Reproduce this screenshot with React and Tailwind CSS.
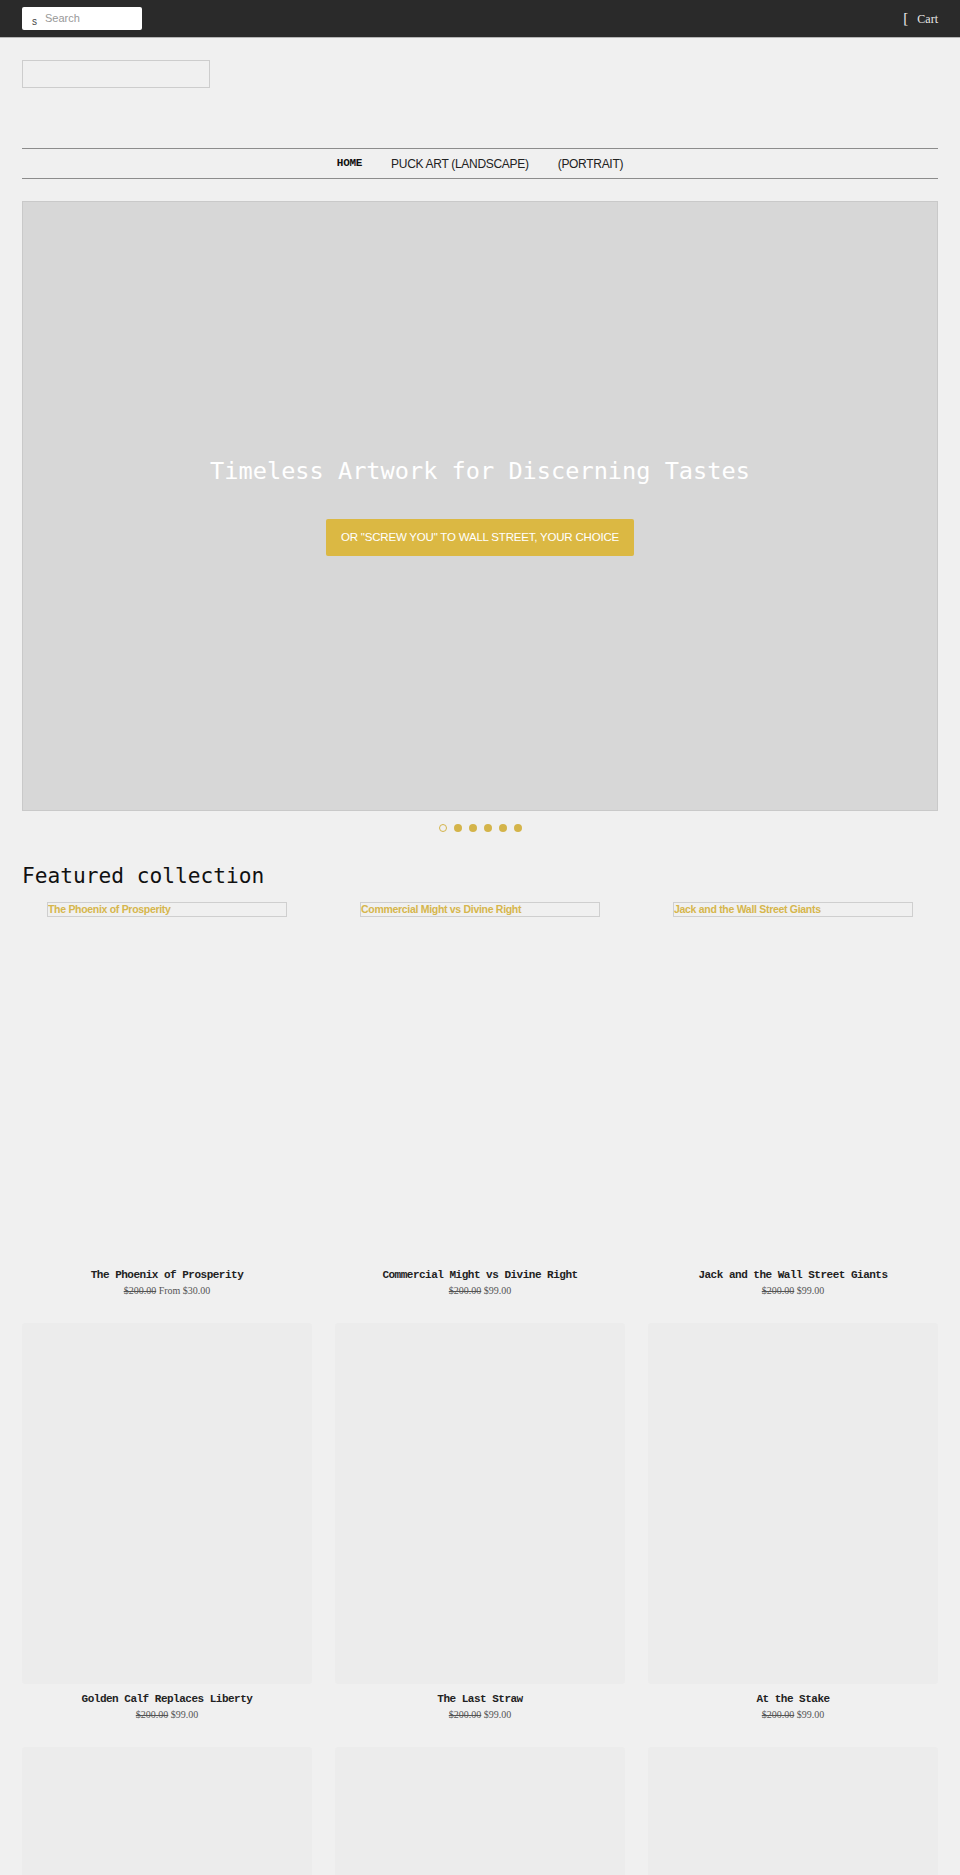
import React from "react";

const MONO = "font-['DejaVu_Sans_Mono',monospace]";

const products = [
  { title: "The Phoenix of Prosperity", was: "$200.00", now: "From $30.00", broken: true },
  { title: "Commercial Might vs Divine Right", was: "$200.00", now: "$99.00", broken: true },
  { title: "Jack and the Wall Street Giants", was: "$200.00", now: "$99.00", broken: true },
  { title: "Golden Calf Replaces Liberty", was: "$200.00", now: "$99.00" },
  { title: "The Last Straw", was: "$200.00", now: "$99.00" },
  { title: "At the Stake", was: "$200.00", now: "$99.00" },
  { title: "", was: "", now: "" },
  { title: "", was: "", now: "" },
  { title: "", was: "", now: "" },
];

function ProductCard({ p }) {
  return (
    <div className="flex flex-col">
      {p.broken ? (
        <div className="h-[361px] flex justify-center">
          <div className="mt-[3px] w-[240px] h-[15px] border border-[#cfcfcf] text-[#d6b64c] text-[10.5px] font-bold leading-[13px] tracking-[-0.3px] font-['Liberation_Sans',sans-serif] overflow-hidden whitespace-nowrap">
            {p.title}
          </div>
        </div>
      ) : (
        <div className="h-[361px] bg-[#ececec] rounded-[3px]" />
      )}
      <div className="mt-[8px] text-center text-[11px] leading-[14px] font-bold text-[#222] tracking-[-0.5px] font-['Liberation_Mono',monospace]">
        {p.title}
      </div>
      <div className="mt-[2px] text-center text-[10px] leading-[14px] text-[#555] font-['Liberation_Serif',serif]">
        <span className="line-through">{p.was}</span> {p.now}
      </div>
    </div>
  );
}

export default function App() {
  return (
    <div className="min-h-screen bg-[#f0f0f0] overflow-hidden">
      {/* top bar */}
      <header className="h-[38px] bg-[#2a2a2a] border-b border-[#b5b5b5] px-[22px] flex items-center justify-between">
        <div className="w-[120px] h-[23px] mt-[-1px] bg-white rounded-[2px] flex items-center">
          <span className="ml-[10px] mt-[7px] text-[10px] text-[#444] font-['Liberation_Sans',sans-serif]">
            s
          </span>
          <span className="ml-[8px] text-[11px] text-[#999] font-['Liberation_Sans',sans-serif]">
            Search
          </span>
        </div>
        <div className="flex items-center gap-[9px] text-[#e8e8e8] font-['Liberation_Serif',serif]">
          <span className="text-[15px] leading-none">[</span>
          <span className="text-[12px]">Cart</span>
        </div>
      </header>

      <main className="px-[22px]">
        {/* logo placeholder */}
        <div className="mt-[22px] w-[188px] h-[28px] border border-[#cdcdcd]" />

        {/* nav */}
        <nav className="mt-[60px] h-[31px] border-y border-[#8c8c8c] flex items-center justify-center gap-[29px] text-[12px] text-[#222]">
          <span className="font-bold text-[11px] tracking-[-0.3px] font-['Liberation_Mono',monospace] text-[#111]">
            HOME
          </span>
          <span className="font-['Liberation_Sans',sans-serif] tracking-[-0.3px]">PUCK ART (LANDSCAPE)</span>
          <span className="font-['Liberation_Sans',sans-serif] tracking-[-0.3px]">(PORTRAIT)</span>
        </nav>

        {/* hero */}
        <section className="mt-[22px] h-[610px] bg-[#d7d7d7] border border-[#c9c9c9] flex flex-col items-center justify-center">
          <h1 className={`${MONO} text-[23.6px] leading-[30px] text-white`}>
            Timeless Artwork for Discerning Tastes
          </h1>
          <button className="mt-[33px] w-[308px] h-[37px] bg-[#dbb843] rounded-[2px] text-white text-[11.5px] tracking-[-0.2px] font-['Liberation_Sans',sans-serif]">
            OR "SCREW YOU" TO WALL STREET, YOUR CHOICE
          </button>
        </section>

        {/* slider dots */}
        <div className="mt-[13px] flex justify-center gap-[7px]">
          <span className="w-[8px] h-[8px] rounded-full border-[1.5px] border-[#d4b44a]" />
          {[0, 1, 2, 3, 4].map((i) => (
            <span key={i} className="w-[8px] h-[8px] rounded-full bg-[#d4b44a]" />
          ))}
        </div>

        {/* featured */}
        <h2 className={`${MONO} mt-[30px] text-[21.2px] leading-[28px] text-[#111]`}>
          Featured collection
        </h2>

        <div className="mt-[9px] grid grid-cols-3 gap-x-[23px] gap-y-[25px]">
          {products.map((p, i) => (
            <ProductCard key={i} p={p} />
          ))}
        </div>
      </main>
    </div>
  );
}
